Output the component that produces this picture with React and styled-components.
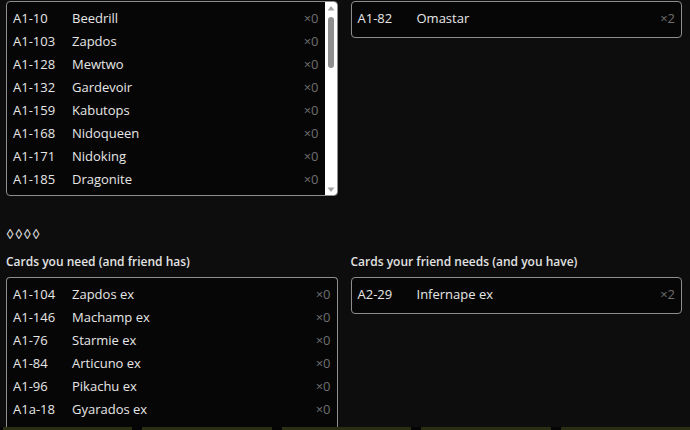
import React from 'react'
import styled, { createGlobalStyle } from 'styled-components'

const GlobalStyle = createGlobalStyle`
  html, body {
    margin: 0;
    padding: 0;
    background: #0d0d0d;
    height: 430px;
    overflow: hidden;
  }
  body {
    font-family: "Open Sans", "Noto Sans", sans-serif;
    color: #e6e6e6;
  }
`

const topInventory = [
  ['A1-10', 'Beedrill', 0], ['A1-103', 'Zapdos', 0], ['A1-128', 'Mewtwo', 0],
  ['A1-132', 'Gardevoir', 0], ['A1-159', 'Kabutops', 0], ['A1-168', 'Nidoqueen', 0],
  ['A1-171', 'Nidoking', 0], ['A1-185', 'Dragonite', 0],
]

const friendExtra = [['A1-82', 'Omastar', 2]]

const youNeed = [
  ['A1-104', 'Zapdos ex', 0], ['A1-146', 'Machamp ex', 0], ['A1-76', 'Starmie ex', 0],
  ['A1-84', 'Articuno ex', 0], ['A1-96', 'Pikachu ex', 0], ['A1a-18', 'Gyarados ex', 0],
]

const friendNeeds = [['A2-29', 'Infernape ex', 2]]

const Page = styled.div`
  padding: 1px 8px 0 6px;
  display: flex;
  flex-direction: column;
`

const Columns = styled.div`
  display: grid;
  grid-template-columns: 1fr 1fr;
  column-gap: 13px;
  align-items: start;
`

const Column = styled.section`
  display: flex;
  flex-direction: column;
`

const Box = styled.div`
  box-sizing: border-box;
  display: flex;
  border: 1px solid #8e8e8e;
  border-radius: 4px;
  background: #060606;
  overflow: hidden;
  ${p => p.$height && `height: ${p.$height}px;`}
  ${p => p.$cut && 'border-bottom: 0; border-radius: 4px 4px 0 0;'}
`

const List = styled.div`
  flex: 1;
  min-width: 0;
  padding: 4px 0 8px;
  overflow: hidden;
`

const Scrollbar = styled.div`
  width: 12px;
  flex: none;
  background: #ffffff;
  display: flex;
  flex-direction: column;
  align-items: center;
  padding: 3px 0 2px;
  box-sizing: border-box;
`

const Arrow = styled.svg`
  width: 8px;
  height: 6px;
  flex: none;
  fill: #a3a3a3;
`

const Thumb = styled.div`
  width: 6px;
  height: 51px;
  margin-top: 6px;
  border-radius: 3px;
  background: #8f8f8f;
`

const Spacer = styled.div`
  flex: 1;
`

const Row = styled.div`
  display: flex;
  align-items: center;
  height: 23px;
  padding: 0 6px;
  font-size: 13px;
  white-space: nowrap;
`

const Code = styled.span`
  width: 59px;
  flex: none;
`

const Name = styled.span`
  flex: 1;
`

const Count = styled.span`
  color: #6f6f6f;
`

const Diamonds = styled.div`
  margin-top: 28px;
  height: 20px;
  line-height: 20px;
  font-size: 14px;
  letter-spacing: 0.5px;
`

const Heading = styled.h3`
  margin: 8px 0 5px;
  height: 20px;
  line-height: 20px;
  font-size: 12px;
  font-weight: 600;
  color: #e2e2e2;
`

const Tiles = styled.div`
  display: flex;
  gap: 10px;
  padding-left: 3px;
  height: 4px;
  background: #050505;
`

const Tile = styled.div`
  flex: 1;
  background: #2a2e12;
`

function CardList({ cards, scroll, ...rest }) {
  return (
    <Box {...rest}>
      <List>
        {cards.map(([code, name, count]) => (
          <Row key={code + name}>
            <Code>{code}</Code>
            <Name>{name}</Name>
            <Count>×{count}</Count>
          </Row>
        ))}
      </List>
      {scroll && (
        <Scrollbar>
          <Arrow viewBox="0 0 8 6"><path d="M0.5 5.5 L4 1 L7.5 5.5 Z" /></Arrow>
          <Thumb />
          <Spacer />
          <Arrow viewBox="0 0 8 6"><path d="M0.5 0.5 L4 5 L7.5 0.5 Z" /></Arrow>
        </Scrollbar>
      )}
    </Box>
  )
}

export default function App() {
  return (
    <>
      <GlobalStyle />
      <Page>
        <Columns>
          <Column>
            <CardList cards={topInventory} $height={195} scroll />
          </Column>
          <Column>
            <CardList cards={friendExtra} />
          </Column>
        </Columns>
        <Diamonds>◊◊◊◊</Diamonds>
        <Columns>
          <Column>
            <Heading>Cards you need (and friend has)</Heading>
            <CardList cards={youNeed} $height={150} $cut />
          </Column>
          <Column>
            <Heading>Cards your friend needs (and you have)</Heading>
            <CardList cards={friendNeeds} />
          </Column>
        </Columns>
      </Page>
      <Tiles>
        {[0, 1, 2, 3, 4].map(i => <Tile key={i} />)}
      </Tiles>
    </>
  )
}
